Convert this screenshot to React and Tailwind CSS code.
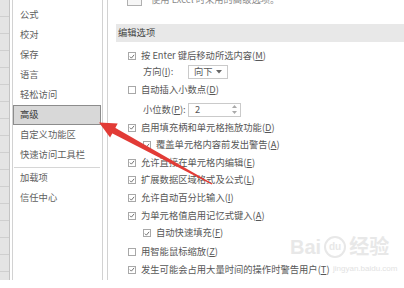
import React from "react"

const font = { fontFamily: '"Noto Sans CJK SC", "Noto Sans", sans-serif' }

const navItems = [
  { label: "公式" },
  { label: "校对" },
  { label: "保存" },
  { label: "语言" },
  { label: "轻松访问" },
  { label: "高级", active: true },
  { label: "自定义功能区" },
  { label: "快速访问工具栏", sep: true },
  { label: "加载项" },
  { label: "信任中心" },
]

const Check = ({ on }) => (
  <span className="flex h-[8px] w-[8px] shrink-0 items-center justify-center border border-[#a8a8a8] bg-white">
    {on && (
      <svg width="7" height="7" viewBox="0 0 8 8">
        <path d="M1.2 4.2 L3.2 6.2 L6.8 1.8" fill="none" stroke="#555" strokeWidth="1.1" />
      </svg>
    )}
  </span>
)

const Key = ({ k }) => (
  <>
    (<span className="underline">{k}</span>)
  </>
)

const CheckRow = ({ h, on, nested, text, k }) => (
  <div className={`flex items-center ${h} ${nested ? "pl-[27px]" : "pl-[12px]"}`}>
    <Check on={on} />
    <span className="ml-[5px] whitespace-nowrap">
      {text}
      <Key k={k} />
    </span>
  </div>
)

export default function App() {
  return (
    <div className="relative h-[288px] w-[404px] overflow-hidden bg-white text-[9.3px] leading-none text-[#575757]" style={font}>
      <div className="flex h-[280px]">
        {/* spreadsheet edge behind the dialog */}
        <div className="flex w-[10px] flex-col border-r border-[#c4c4c4] bg-[#e4e4e4]">
          {Array.from({ length: 17 }).map((_, i) => (
            <div key={i} className="h-[17px] shrink-0 border-b border-[#cfcfcf]" />
          ))}
        </div>
        <div className="w-[2px]" />

        {/* left navigation */}
        <div className="flex w-[91px] flex-col border-x border-[#d2d2d2] pt-[5px] text-[#606060]">
          {navItems.map((it) => (
            <React.Fragment key={it.label}>
              <div
                className={
                  it.active
                    ? "mr-[1px] flex h-[20px] items-center border border-[#8c8c8c] bg-[#d8d8d8] pl-[6px] text-[#3a3a3a]"
                    : "flex h-[20px] items-center pl-[7px]"
                }
              >
                {it.label}
              </div>
              {it.sep && <div className="ml-[1px] mr-[2px] mt-[2px] h-px bg-[#d6d6d6]" />}
            </React.Fragment>
          ))}
        </div>
        <div className="w-[4px]" />

        {/* options panel */}
        <div className="flex flex-1 flex-col border-l border-[#d2d2d2] pl-[8px]">
          <div className="-mt-[7px] flex h-[14px] items-center pl-[11px]">
            <span className="h-[12px] w-[15px] border border-[#b0b0b0] bg-[#f6f6f6]" />
            <span className="ml-[9px] whitespace-nowrap text-[#8a8a8a]">使用 Excel 时采用的高级选项。</span>
          </div>
          <div className="mt-[17px] flex h-[18px] items-center bg-[#e8e8e8] pl-[2px] text-[#444]">编辑选项</div>
          <div className="h-[6px]" />
          <CheckRow h="h-[16px]" on text="按 Enter 键后移动所选内容" k="M" />
          <div className="flex h-[16px] items-center pl-[27px]">
            <span className="w-[45px] whitespace-nowrap">
              方向<Key k="I" />:
            </span>
            <span className="flex h-[14px] w-[40px] items-center justify-between border border-[#cacaca] px-[5px]">
              <span>向下</span>
              <svg width="6" height="4" viewBox="0 0 6 4">
                <path d="M0 0 H6 L3 3.5 Z" fill="#666" />
              </svg>
            </span>
          </div>
          <CheckRow h="h-[20px]" text="自动插入小数点" k="D" />
          <div className="flex h-[19px] items-center pl-[27px]">
            <span className="w-[45px] whitespace-nowrap">
              小位数<Key k="P" />:
            </span>
            <span className="flex h-[14px] w-[53px] items-center justify-between border border-[#cacaca] pl-[6px] pr-[3px]">
              <span>2</span>
              <span className="flex flex-col gap-[3px]">
                <svg width="5" height="3" viewBox="0 0 5 3">
                  <path d="M0 3 L2.5 0 L5 3 Z" fill="#aaa" />
                </svg>
                <svg width="5" height="3" viewBox="0 0 5 3">
                  <path d="M0 0 L2.5 3 L5 0 Z" fill="#aaa" />
                </svg>
              </span>
            </span>
          </div>
          <CheckRow h="h-[17px]" on text="启用填充柄和单元格拖放功能" k="D" />
          <CheckRow h="h-[18px]" on nested text="覆盖单元格内容前发出警告" k="A" />
          <CheckRow h="h-[17px]" on text="允许直接在单元格内编辑" k="E" />
          <CheckRow h="h-[18px]" on text="扩展数据区域格式及公式" k="L" />
          <CheckRow h="h-[18px]" on text="允许自动百分比输入" k="I" />
          <CheckRow h="h-[17px]" on text="为单元格值启用记忆式键入" k="A" />
          <CheckRow h="h-[18px]" on nested text="自动快速填充" k="F" />
          <CheckRow h="h-[19px]" text="用智能鼠标缩放" k="Z" />
          <CheckRow h="h-[17px]" on text="发生可能会占用大量时间的操作时警告用户" k="T" />
        </div>
      </div>

      {/* watermark */}
      <div className="pointer-events-none absolute left-[290px] top-[236px] flex items-center gap-[3px] text-[20px] font-bold text-[#e8e8e8]" style={{ fontFamily: '"Liberation Sans", "Noto Sans CJK SC", sans-serif' }}>
        <span>Bai</span>
        <span className="flex h-[22px] w-[22px] items-center justify-center rounded-full border-2 border-[#e8e8e8] text-[10px]">du</span>
        <span>经验</span>
      </div>
      <div className="pointer-events-none absolute left-[333px] top-[265px] text-[8px] text-[#e2e2e2]" style={{ fontFamily: '"Liberation Sans", sans-serif' }}>
        jingyan.baidu.com
      </div>

      {/* red annotation arrow */}
      <svg className="pointer-events-none absolute left-0 top-0" width="404" height="288" viewBox="0 0 404 288">
        <polygon points="99,122.5 117.7,123.6 110.1,137.6" fill="#e23b36" />
        <polygon points="110.6,132.4 113.8,127 212.3,183.5 211.7,184.5" fill="#e23b36" />
      </svg>
    </div>
  )
}
